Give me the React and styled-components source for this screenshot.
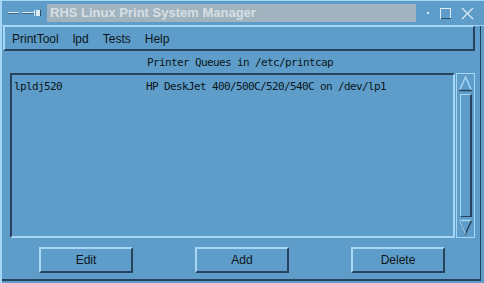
import styled, { createGlobalStyle } from "styled-components";

const Global = createGlobalStyle`
  html, body { margin: 0; padding: 0; background: #5e9dc9; }
`;

const LIGHT = "#a6d6f6";
const DARK = "#26425c";
const BG = "#5e9dc9";

// whole window frame
const Frame = styled.div`
  width: 484px;
  height: 283px;
  box-sizing: border-box;
  overflow: hidden;
  background: ${BG};
  border-top: 1px solid ${LIGHT};
  border-left: 2px solid ${LIGHT};
  display: flex;
  flex-direction: column;
  font-family: "Liberation Sans", Arial, sans-serif;
  color: #0c1620;
`;

const TitleBar = styled.div`
  height: 24px;
  flex: none;
  display: flex;
  align-items: flex-start;
  border-bottom: 1px solid ${LIGHT};
`;

const TitleIcons = styled.div`
  width: 45px;
  height: 24px;
  flex: none;
`;

const TitleBox = styled.div`
  margin-top: 3px;
  width: 369px;
  height: 18px;
  background: #a0b3be;
  color: #d6dfe4;
  font-weight: bold;
  font-size: 13px;
  line-height: 18px;
  padding-left: 3px;
  box-sizing: border-box;
  white-space: nowrap;
`;

const Controls = styled.div`
  flex: 1;
  height: 24px;
`;

// client area under the title
const Client = styled.div`
  flex: none;
  height: 255px;
  width: 479px;
  box-sizing: border-box;
  border-right: 1px solid ${DARK};
  border-bottom: 2px solid ${DARK};
  display: flex;
  flex-direction: column;
`;

const MenuBar = styled.div`
  height: 25px;
  margin: 0 5px 0 1px;
  box-sizing: border-box;
  border-top: 1px solid ${LIGHT};
  border-left: 2px solid ${LIGHT};
  border-bottom: 2px solid ${DARK};
  border-right: 2px solid ${DARK};
  display: flex;
  align-items: center;
  padding-left: 7px;
  gap: 14px;
  font-size: 12px;
`;

const MenuItem = styled.span`
  line-height: 14px;
  padding-top: 1px;
`;

const Mono = `
  font-family: "DejaVu Sans Mono", "Liberation Mono", monospace;
  font-size: 11px;
  letter-spacing: -0.62px;
`;

const Caption = styled.div`
  margin-top: 5px;
  height: 13px;
  line-height: 13px;
  text-align: center;
  ${Mono}
  padding-right: 2px;
`;

const ListRow = styled.div`
  margin-top: 4px;
  height: 165px;
  display: flex;
  padding-left: 8px;
`;

const ListBox = styled.div`
  width: 445px;
  height: 165px;
  box-sizing: border-box;
  border-top: 2px solid ${DARK};
  border-left: 2px solid ${DARK};
  border-bottom: 2px solid ${LIGHT};
  border-right: 2px solid ${LIGHT};
  padding: 5px 0 0 2px;
  ${Mono}
`;

const Entry = styled.div`
  display: flex;
  height: 13px;
  line-height: 13px;
  white-space: pre;
`;

const Cell = styled.span`
  width: ${(p) => p.$w}px;
  flex: none;
`;

const Scroll = styled.div`
  width: 19px;
  height: 165px;
  margin-left: 1px;
  box-sizing: border-box;
  border: 1px solid ${LIGHT};
  display: flex;
  flex-direction: column;
  align-items: center;
  padding: 1px 0;
`;

const Thumb = styled.div`
  flex: 1;
  width: 12px;
  margin: 2px 0;
  box-sizing: border-box;
  border-left: 1px solid ${LIGHT};
  border-top: 1px solid ${LIGHT};
  border-right: 2px solid ${DARK};
  border-bottom: 1px solid ${DARK};
`;

const ButtonRow = styled.div`
  margin-top: 9px;
  display: flex;
  gap: 62px;
  padding-left: 37px;
`;

const Button = styled.div`
  width: 94px;
  height: 26px;
  box-sizing: border-box;
  border-top: 2px solid ${LIGHT};
  border-left: 2px solid ${LIGHT};
  border-bottom: 2px solid ${DARK};
  border-right: 2px solid ${DARK};
  display: flex;
  align-items: center;
  justify-content: center;
  font-size: 12px;
`;

const ArrowUp = () => (
  <svg width="15" height="17" viewBox="0 0 15 17">
    <polyline points="1.5,15.5 7.5,2 13.5,15.5" fill="none" stroke={LIGHT} strokeWidth="1.5" />
    <line x1="1" y1="15.5" x2="14" y2="15.5" stroke={DARK} strokeWidth="1.5" />
  </svg>
);

const ArrowDown = () => (
  <svg width="15" height="17" viewBox="0 0 15 17">
    <line x1="1" y1="1.5" x2="14" y2="1.5" stroke={LIGHT} strokeWidth="1.5" />
    <polyline points="1.5,1.5 7.5,15 13.5,1.5" fill="none" stroke={DARK} strokeWidth="1.5" />
    <line x1="1.5" y1="1.5" x2="7.5" y2="15" stroke={LIGHT} strokeWidth="1.2" />
  </svg>
);

export default function App() {
  return (
    <>
      <Global />
      <Frame>
        <TitleBar>
          <TitleIcons>
            <svg width="45" height="24" viewBox="0 0 45 24">
              <line x1="6" y1="11.5" x2="17" y2="11.5" stroke="#dbeaf4" strokeWidth="1" />
              <line x1="6" y1="12.5" x2="17" y2="12.5" stroke="#3c6a8c" strokeWidth="1" />
              <line x1="20" y1="11.5" x2="32" y2="11.5" stroke="#dbeaf4" strokeWidth="1" />
              <line x1="20" y1="12.5" x2="32" y2="12.5" stroke="#3c6a8c" strokeWidth="1" />
              <line x1="32.5" y1="9" x2="32.5" y2="15" stroke="#dbeaf4" strokeWidth="1" />
              <rect x="34" y="9" width="4" height="6" fill="#dbeaf4" />
              <line x1="38.5" y1="9" x2="38.5" y2="15" stroke="#2c4c68" strokeWidth="1" />
            </svg>
          </TitleIcons>
          <TitleBox>RHS Linux Print System Manager</TitleBox>
          <Controls>
            <svg width="66" height="24" viewBox="0 0 66 24">
              <rect x="11" y="11" width="2" height="2" fill="#dbeaf4" />
              <rect x="24.5" y="7.5" width="10" height="10" fill="none" stroke="#dbeaf4" strokeWidth="1" />
              <line x1="25" y1="17.5" x2="35" y2="17.5" stroke="#2c4c68" strokeWidth="1" />
              <line x1="46" y1="7" x2="57" y2="18" stroke="#dbeaf4" strokeWidth="1.2" />
              <line x1="57" y1="7" x2="46" y2="18" stroke="#dbeaf4" strokeWidth="1.2" />
            </svg>
          </Controls>
        </TitleBar>
        <Client>
          <MenuBar>
            <MenuItem>PrintTool</MenuItem>
            <MenuItem>lpd</MenuItem>
            <MenuItem>Tests</MenuItem>
            <MenuItem>Help</MenuItem>
          </MenuBar>
          <Caption>Printer Queues in /etc/printcap</Caption>
          <ListRow>
            <ListBox>
              <Entry>
                <Cell $w={132}>lpldj520</Cell>
                <Cell $w={300}>HP DeskJet 400/500C/520/540C on /dev/lp1</Cell>
              </Entry>
            </ListBox>
            <Scroll>
              <ArrowUp />
              <Thumb />
              <ArrowDown />
            </Scroll>
          </ListRow>
          <ButtonRow>
            <Button>Edit</Button>
            <Button>Add</Button>
            <Button>Delete</Button>
          </ButtonRow>
        </Client>
      </Frame>
    </>
  );
}
